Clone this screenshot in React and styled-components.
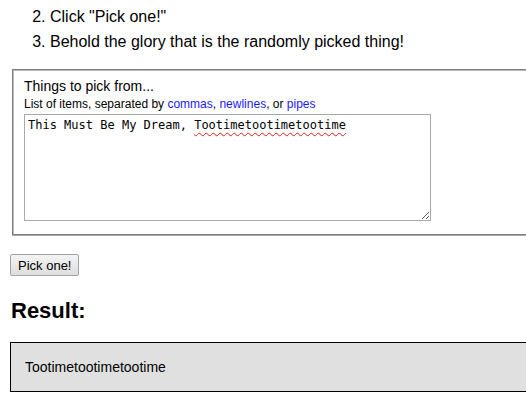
import React from "react";
import styled, { createGlobalStyle } from "styled-components";

const Global = createGlobalStyle`
  html, body { margin: 0; padding: 0; background: #fff; overflow: hidden; }
  body { font-family: "Liberation Sans", Arial, sans-serif; color: #000; }
`;

const Page = styled.div`
  width: 580px;
  padding: 4px 0 0 10px;
`;

const Steps = styled.ol`
  margin: 0;
  padding-left: 40px;
  font-size: 16px;
  line-height: 25px;
`;

const Step = styled.li`
  padding-left: 0;
`;

const Box = styled.fieldset`
  margin: 15px 0 0 2px;
  padding: 8px 11px 13px 11px;
  border: 1px solid #7f7f7f;
  box-shadow: inset 1px 1px 0 #b8b8b8, 0 1px 0 #a8a8a8;
  min-width: 0;
`;

const Label = styled.label`
  display: block;
  font-size: 14px;
  line-height: 17px;
`;

const Hint = styled.div`
  font-size: 12px;
  line-height: 14px;
  margin: 2px 0 3px;
`;

const Link = styled.a`
  color: #1a1aff;
  text-decoration: none;
`;

const AreaWrap = styled.div`
  position: relative;
  width: 407px;
  height: 107px;
`;

const Area = styled.textarea`
  box-sizing: border-box;
  width: 407px;
  height: 107px;
  margin: 0;
  padding: 3px 3px;
  border: 1px solid #a9a9a9;
  font-family: "DejaVu Sans Mono", "Liberation Mono", monospace;
  font-size: 12px;
  line-height: 15px;
  color: #000;
  background: #fff;
  outline: none;
  resize: both;
`;

const Squiggles = styled.div`
  position: absolute;
  left: 1px;
  top: 1px;
  padding: 3px 3px;
  font-family: "DejaVu Sans Mono", "Liberation Mono", monospace;
  font-size: 12px;
  line-height: 15px;
  color: transparent;
  pointer-events: none;
  white-space: pre;
`;

const Misspelled = styled.span`
  text-decoration: underline wavy #e02020;
  text-decoration-thickness: 1px;
  text-underline-offset: 3px;
`;

const Button = styled.button`
  display: block;
  margin: 19px 0 0 0;
  height: 22px;
  padding: 0 7px;
  font-family: "Liberation Sans", Arial, sans-serif;
  font-size: 13px;
  color: #000;
  border: 1px solid #a3a3a3;
  border-radius: 2px;
  background: linear-gradient(#f4f4f4, #dedede);
`;

const Heading = styled.h2`
  margin: 22px 0 0 1px;
  font-size: 22px;
  line-height: 26px;
  font-weight: bold;
`;

const Result = styled.div`
  margin-top: 18px;
  border: 1px solid #000;
  background: #e0e0e0;
  padding: 16px 14px 15px;
  font-size: 14px;
  line-height: 17px;
`;

const text = "This Must Be My Dream, Tootimetootimetootime";

export default function App() {
  return (
    <>
      <Global />
      <Page>
        <Steps start={2}>
          <Step>Click "Pick one!"</Step>
          <Step>Behold the glory that is the randomly picked thing!</Step>
        </Steps>
        <Box>
          <Label htmlFor="items">Things to pick from...</Label>
          <Hint>
            List of items, separated by <Link href="#">commas</Link>,{" "}
            <Link href="#">newlines</Link>, or <Link href="#">pipes</Link>
          </Hint>
          <AreaWrap>
            <Area id="items" defaultValue={text} spellCheck={false} />
            <Squiggles aria-hidden="true">
              This Must Be My Dream, <Misspelled>Tootimetootimetootime</Misspelled>
            </Squiggles>
          </AreaWrap>
        </Box>
        <Button>Pick one!</Button>
        <Heading>Result:</Heading>
        <Result>Tootimetootimetootime</Result>
      </Page>
    </>
  );
}
